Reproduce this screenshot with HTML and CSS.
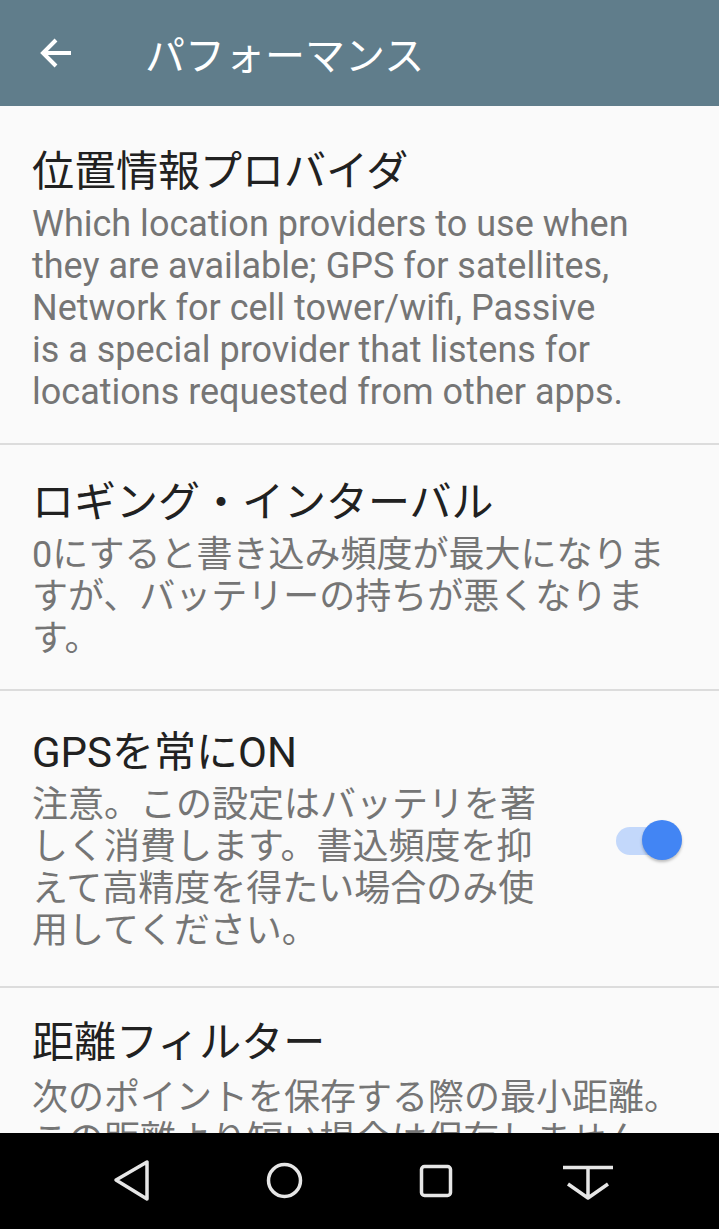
FILE: index.html
```html
<!DOCTYPE html>
<html>

<head>
    <title>パフォーマンス</title>
    <meta charset="UTF-8">
    <meta name="viewport" content="width=device-width, initial-scale=1.0">
    <link rel="stylesheet" href="styles.css">
</head>

<body>
    <div class="screen">
        <header class="appbar">
            <svg class="back" width="32" height="32" viewBox="0 0 32 32">
                <path d="M31 16 H3 M16 3 L3 16 L16 29" fill="none" stroke="#fff" stroke-width="4" />
            </svg>
            <h1 class="appbar-title">パフォーマンス</h1>
        </header>

        <div class="list">
            <div class="pref pref-first">
                <div class="pref-text">
                    <div class="pref-title">位置情報プロバイダ</div>
                    <div class="pref-summary">Which location providers to use when<br>they are available; GPS for satellites,<br>Network for cell tower/wifi, Passive<br>is a special provider that listens for<br>locations requested from other apps.</div>
                </div>
            </div>

            <div class="pref">
                <div class="pref-text">
                    <div class="pref-title">ロギング・インターバル</div>
                    <div class="pref-summary">0にすると書き込み頻度が最大になりま<br>すが、バッテリーの持ちが悪くなりま<br>す。</div>
                </div>
            </div>

            <div class="pref pref-switch">
                <div class="pref-text">
                    <div class="pref-title">GPSを常にON</div>
                    <div class="pref-summary">注意。この設定はバッテリを著<br>しく消費します。書込頻度を抑<br>えて高精度を得たい場合のみ使<br>用してください。</div>
                </div>
                <div class="switch">
                    <div class="switch-track"></div>
                    <div class="switch-thumb"></div>
                </div>
            </div>

            <div class="pref pref-last">
                <div class="pref-text">
                    <div class="pref-title">距離フィルター</div>
                    <div class="pref-summary">次のポイントを保存する際の最小距離。<br>この距離より短い場合は保存しません。</div>
                </div>
            </div>
        </div>

        <nav class="navbar">
            <div class="nav-item">
                <svg width="50" height="50" viewBox="0 0 50 50">
                    <path d="M9 24 L40 6 L40 43 Z" fill="none" stroke="#e6e6e6" stroke-width="3.5" stroke-linejoin="round" />
                </svg>
            </div>
            <div class="nav-item">
                <svg width="50" height="50" viewBox="0 0 50 50">
                    <circle cx="25.5" cy="24.5" r="16" fill="none" stroke="#e6e6e6" stroke-width="3.5" />
                </svg>
            </div>
            <div class="nav-item">
                <svg width="50" height="50" viewBox="0 0 50 50">
                    <rect x="10.5" y="10.5" width="29" height="29" rx="3" fill="none" stroke="#e6e6e6" stroke-width="3.5" />
                </svg>
            </div>
            <div class="nav-item">
                <svg width="52" height="50" viewBox="0 0 52 50">
                    <path d="M1 11.5 H51 M26 12 V41 M6 28 L26 42 L46 28" fill="none" stroke="#e6e6e6" stroke-width="3.5" stroke-linejoin="round" />
                </svg>
            </div>
        </nav>
    </div>
</body>

</html>
```

FILE: styles.css
```css
body {
    margin: 0;
    font-family: Roboto, "Noto Sans CJK JP", sans-serif;
    background-color: #fafafa;
}

.screen {
    width: 719px;
    height: 1229px;
    display: flex;
    flex-direction: column;
    overflow: hidden;
}

.appbar {
    height: 106px;
    flex-shrink: 0;
    background-color: #607d8b;
    display: flex;
    align-items: center;
    padding-left: 40px;
}

.back {
    flex-shrink: 0;
}

.appbar-title {
    margin: 0 0 0 73px;
    color: #fff;
    font-family: "Noto Sans CJK JP", sans-serif;
    font-size: 40px;
    font-weight: 400;
    line-height: 1;
}

.list {
    flex: 1;
    overflow: hidden;
    padding-top: 8px;
}

.pref {
    display: flex;
    align-items: center;
    padding: 34px 32px 29px;
    border-bottom: 2px solid #dcdcdc;
}

.pref-first {
    padding-bottom: 30px;
}

.pref-switch {
    padding-top: 38px;
    padding-bottom: 34px;
}

.pref-last {
    padding-top: 31px;
    border-bottom: none;
}

.pref-last .pref-summary {
    margin-top: 10px;
}

.pref-text {
    flex: 1;
}

.pref-title {
    font-size: 42px;
    line-height: 48px;
    color: #212121;
}

.pref-summary {
    margin-top: 7px;
    font-size: 36px;
    line-height: 42px;
    color: #757575;
}

.switch {
    position: relative;
    width: 66px;
    height: 42px;
    margin-right: 5px;
    flex-shrink: 0;
}

.switch-track {
    position: absolute;
    left: 0;
    top: 7px;
    width: 58px;
    height: 28px;
    border-radius: 14px;
    background-color: #c3d8fb;
}

.switch-thumb {
    position: absolute;
    right: 0;
    top: 0;
    width: 40px;
    height: 40px;
    border-radius: 50%;
    background-color: #4285f4;
    box-shadow: 0 2px 3px rgba(0, 0, 0, 0.25);
}

.navbar {
    height: 96px;
    flex-shrink: 0;
    background-color: #000;
    display: flex;
    align-items: center;
    padding: 0 55px 0 56px;
}

.nav-item {
    flex: 1;
    display: flex;
    justify-content: center;
}

.nav-item svg {
    display: block;
}
```
